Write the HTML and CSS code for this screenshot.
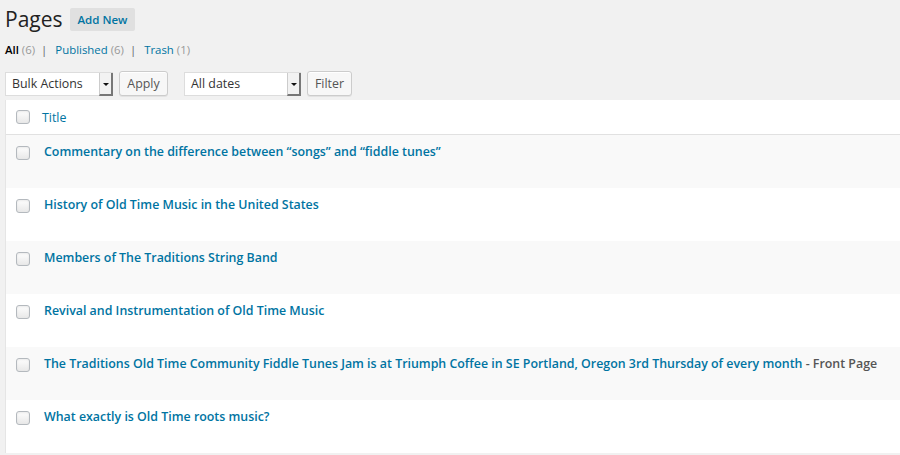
FILE: index.html
```html
<!DOCTYPE html>
<html>
<head>
<meta charset="utf-8">
<link rel="stylesheet" href="styles.css">
</head>
<body>
<div class="wrap">
  <div class="heading">
    <h2 class="title">Pages</h2>
    <a class="add-new">Add New</a>
  </div>
  <ul class="subsubsub">
    <li><a class="current">All <span class="count">(6)</span></a><span class="sep">|</span></li>
    <li><a>Published <span class="count">(6)</span></a><span class="sep">|</span></li>
    <li><a>Trash <span class="count">(1)</span></a></li>
  </ul>
  <div class="tablenav">
    <div class="select sel-bulk"><span class="sel-text">Bulk Actions</span><span class="sel-arrow"></span></div>
    <button class="btn btn-apply">Apply</button>
    <div class="select sel-dates"><span class="sel-text">All dates</span><span class="sel-arrow"></span></div>
    <button class="btn btn-filter">Filter</button>
  </div>
  <div class="table">
    <div class="row head">
      <span class="cb"></span><a class="col-title">Title</a>
    </div>
    <div class="row alt"><span class="cb"></span><a class="row-title">Commentary on the difference between “songs” and “fiddle tunes”</a></div>
    <div class="row"><span class="cb"></span><a class="row-title">History of Old Time Music in the United States</a></div>
    <div class="row alt"><span class="cb"></span><a class="row-title">Members of The Traditions String Band</a></div>
    <div class="row"><span class="cb"></span><a class="row-title">Revival and Instrumentation of Old Time Music</a></div>
    <div class="row alt"><span class="cb"></span><span class="row-wrap"><a class="row-title">The Traditions Old Time Community Fiddle Tunes Jam is at Triumph Coffee in SE Portland, Oregon 3rd Thursday of every month</a><span class="state"> - Front Page</span></span></div>
    <div class="row"><span class="cb"></span><a class="row-title">What exactly is Old Time roots music?</a></div>
  </div>
</div>
</body>
</html>
```
FILE: styles.css
```css
html, body {
  margin: 0;
  padding: 0;
  background: #f1f1f1;
  font-family: "Open Sans", "Liberation Sans", sans-serif;
  font-size: 12.4px;
  color: #444;
  overflow: hidden;
  height: 455px;
}
.wrap {
  padding-left: 5px;
}
.heading {
  display: flex;
  align-items: center;
  height: 23px;
  margin-top: 8px;
}
.title {
  margin: 0;
  font-size: 21px;
  font-weight: 400;
  color: #222;
  line-height: 23px;
}
.add-new {
  margin-left: 7px;
  background: #e0e0e0;
  color: #0074a2;
  font-weight: 600;
  font-size: 11.5px;
  line-height: 23px;
  padding: 0 8px;
  border-radius: 2px;
}
.subsubsub {
  list-style: none;
  margin: 9px 0 0 0;
  padding: 0;
  display: flex;
  height: 20px;
  line-height: 20px;
  font-size: 11.4px;
}
.subsubsub a {
  color: #0074a2;
}
.subsubsub a.current {
  color: #000;
  font-weight: 600;
}
.count {
  color: #999;
  font-weight: 400;
}
.sep {
  color: #666;
  margin: 0 8px 0 6px;
}
.tablenav {
  display: flex;
  align-items: center;
  margin-top: 11px;
  height: 25px;
}
.select {
  display: flex;
  background: #fff;
  border: 1px solid #ddd;
  box-sizing: border-box;
  height: 24px;
}
.sel-text {
  flex: 1;
  padding-left: 6px;
  line-height: 22px;
  color: #333;
  font-size: 12.4px;
}
.sel-arrow {
  width: 11px;
  position: relative;
  background: #f2f2f2;
  border-left: 1px solid #ccc;
  border-right: 2px solid #777;
  border-bottom: 2px solid #777;
  margin-bottom: -1px;
  margin-right: -1px;
}
.sel-arrow::after {
  content: "";
  position: absolute;
  left: 3px;
  top: 10px;
  border-left: 3px solid transparent;
  border-right: 3px solid transparent;
  border-top: 3px solid #111;
}
.sel-bulk {
  width: 108px;
}
.sel-dates {
  width: 117px;
  margin-left: 16px;
}
.btn {
  font-family: inherit;
  font-size: 12.4px;
  color: #555;
  background: #f7f7f7;
  border: 1px solid #ccc;
  border-radius: 3px;
  height: 25px;
  padding: 0;
  margin-left: 6px;
  line-height: 23px;
  box-shadow: inset 0 1px 0 #fff, 0 1px 0 rgba(0,0,0,0.06);
}
.btn-apply {
  width: 49px;
}
.btn-filter {
  width: 45px;
}
.table {
  margin-top: 4px;
  background: #fff;
  border-left: 1px solid #e5e5e5;
}
.row {
  display: flex;
  align-items: flex-start;
  height: 53px;
  box-sizing: border-box;
  padding: 11px 0 0 10px;
}
.row.alt {
  background: #f9f9f9;
}
.row.head {
  height: 35px;
  padding-top: 10px;
  border-bottom: 1px solid #e1e1e1;
  background: #fff;
}
.cb {
  width: 12px;
  height: 12px;
  border: 1px solid #b4b9be;
  border-radius: 3px;
  background: linear-gradient(#fefefe, #e8e8e8);
  box-shadow: inset 0 1px 2px rgba(0,0,0,0.08);
  flex: none;
}
.col-title {
  margin-left: 12px;
  margin-top: 1px;
  color: #0074a2;
  line-height: 14px;
  font-size: 12.4px;
}
.row-title, .row-wrap {
  margin-left: 14px;
  line-height: 12px;
  font-size: 12.4px;
  white-space: nowrap;
}
.row-title {
  color: #0074a2;
  font-weight: 600;
}
.row-wrap .row-title {
  margin-left: 0;
}
.state {
  color: #555;
  font-weight: 600;
}
```
